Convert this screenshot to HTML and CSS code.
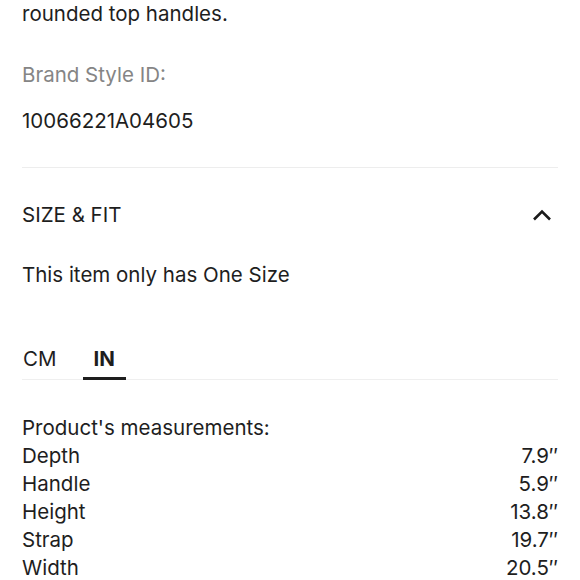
FILE: index.html
```html
<!DOCTYPE html>
<html>
<head>
<meta charset="utf-8">
<link rel="stylesheet" href="styles.css">
</head>
<body>
<div class="page">
  <p class="desc">rounded top handles.</p>
  <p class="label">Brand Style ID:</p>
  <p class="value">10066221A04605</p>
  <hr class="divider">
  <div class="section-head">
    <span class="section-title">SIZE &amp; FIT</span>
    <svg class="chevron" width="20" height="14" viewBox="0 0 20 14"><path d="M2 11.5 L10 3.5 L18 11.5" fill="none" stroke="#1a1a1a" stroke-width="2.6"/></svg>
  </div>
  <p class="note">This item only has One Size</p>
  <div class="tabs">
    <span class="tab">CM</span>
    <span class="tab active">IN</span>
  </div>
  <div class="measure">
    <div class="measure-title">Product's measurements:</div>
    <div class="row"><span>Depth</span><span>7.9″</span></div>
    <div class="row"><span>Handle</span><span>5.9″</span></div>
    <div class="row"><span>Height</span><span>13.8″</span></div>
    <div class="row"><span>Strap</span><span>19.7″</span></div>
    <div class="row"><span>Width</span><span>20.5″</span></div>
  </div>
</div>
</body>
</html>
```
FILE: styles.css
```css
html, body {
  margin: 0;
  padding: 0;
  background: #fff;
}
.page {
  padding: 0 22px;
  font-family: Inter, "Noto Sans", sans-serif;
  font-size: 20.5px;
  line-height: 28px;
  color: #1e1e1e;
}
p { margin: 0; }
.desc { margin-top: 0; }
.label { margin-top: 33px; color: #858585; }
.value { margin-top: 18px; }
.divider {
  border: 0;
  border-top: 1px solid #ededed;
  margin: 32px 0 0;
  height: 0;
}
.section-head {
  margin-top: 33px;
  display: flex;
  justify-content: space-between;
  align-items: center;
  height: 28px;
}
.chevron { margin-right: 6px; }
.note { margin-top: 32px; }
.tabs {
  margin-top: 56px;
  display: flex;
  gap: 25px;
  border-bottom: 1px solid #efefef;
}
.tab {
  padding: 0 1px 6px;
  position: relative;
}
.tab.active {
  font-weight: 700;
  padding: 0 11px 6px;
}
.tab.active::after {
  content: "";
  position: absolute;
  left: 0;
  right: 0;
  bottom: -1px;
  height: 3px;
  background: #1e1e1e;
}
.measure { margin-top: 34px; }
.row {
  display: flex;
  justify-content: space-between;
}
```
